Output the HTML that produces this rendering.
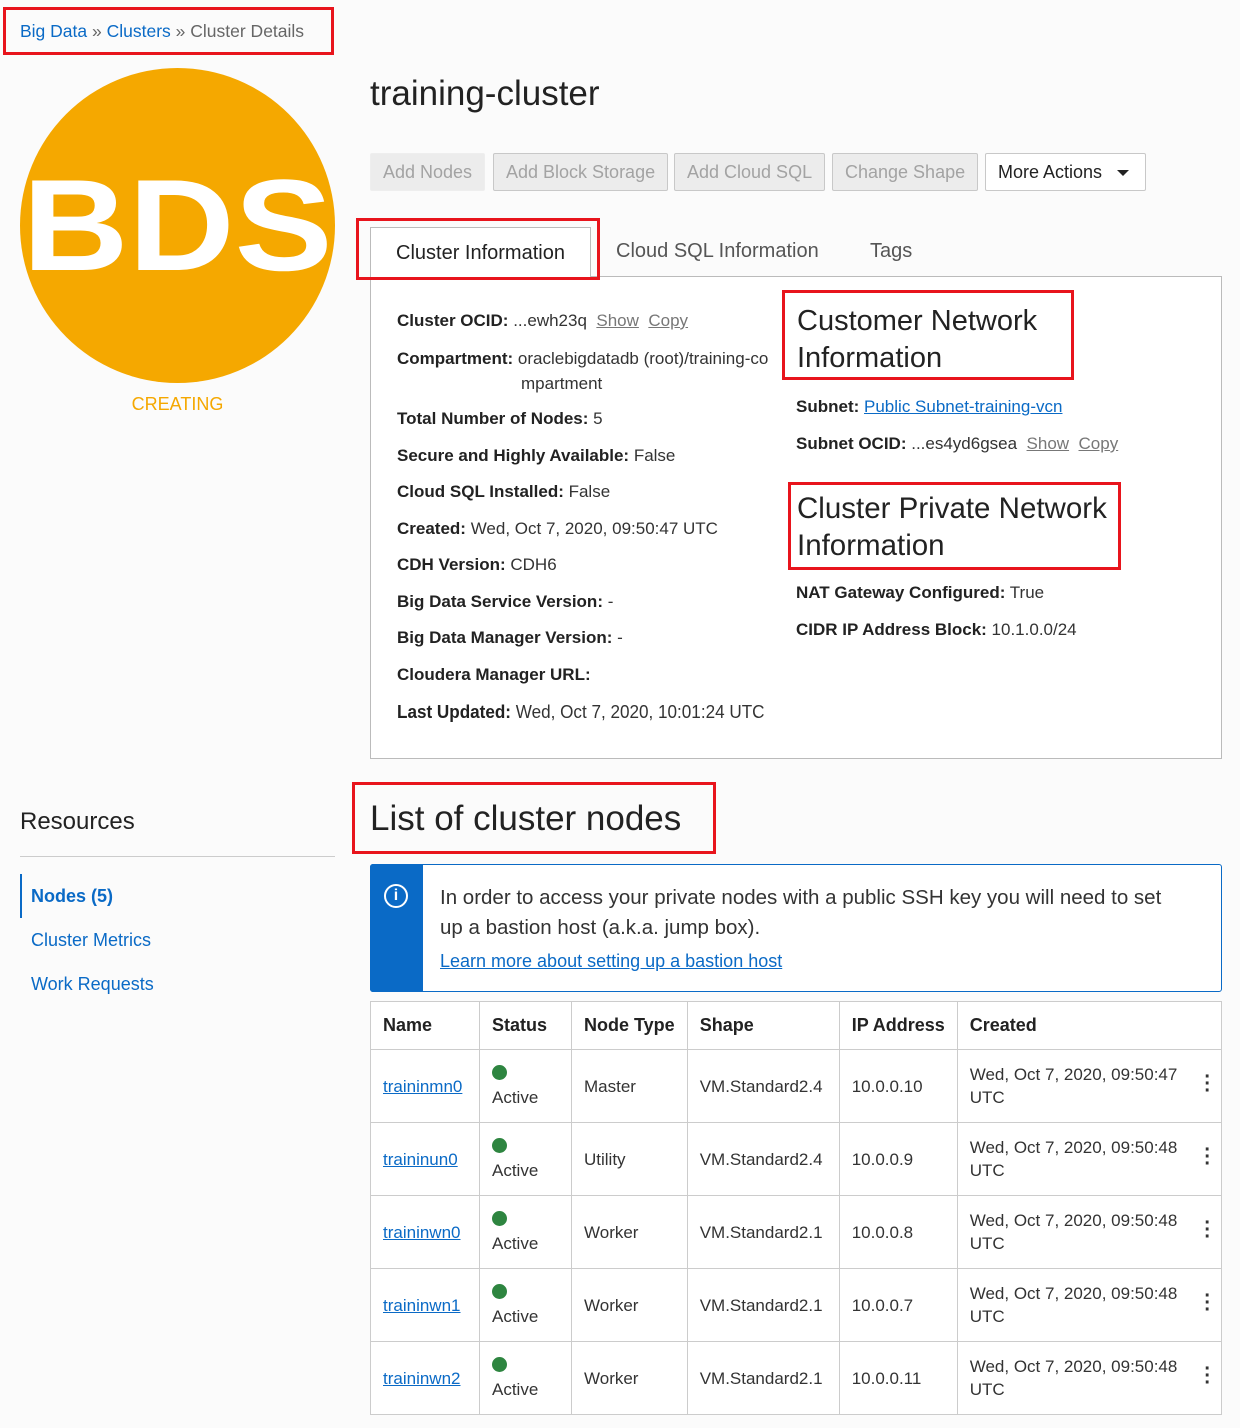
<!DOCTYPE html>
<html><head><meta charset="utf-8"><style>
body{margin:0;width:1240px;height:1428px;background:#fbfbfb;font-family:"Liberation Sans",sans-serif;color:#333;position:relative;overflow:hidden}
.a{position:absolute;white-space:nowrap}
.red{position:absolute;border:3px solid #e8141c;box-sizing:border-box}
a,.lnk{color:#0a6ac6}
.btn{position:absolute;top:153px;height:38px;box-sizing:border-box;border:1px solid #c8c8c8;background:#ececec;color:#a3a3a3;font-size:18px;line-height:36px;padding:0 12px;border-radius:2px}
.lb{font-weight:bold;color:#222}
.f{font-size:17px;color:#333}
.u{text-decoration:underline;color:#777}
td,th{border-right:1px solid #ccc;border-bottom:1px solid #ccc;padding:0 12px;font-size:17px;text-align:left;vertical-align:middle}
th{height:47px;color:#222;font-size:18px}
td{height:72px;line-height:23px}
tr td:last-child,tr th:last-child{border-right:none}
.dot{display:inline-block;width:15px;height:15px;border-radius:50%;background:#2e8540}
td a{text-decoration:underline}
</style></head><body>
<div class="red" style="left:3px;top:7px;width:331px;height:48px"></div>
<div class="a" style="left:20px;top:21px;font-size:17.5px"><span class="lnk">Big Data</span> <span style="color:#666">»</span> <span class="lnk">Clusters</span> <span style="color:#666">» Cluster Details</span></div>
<div class="a" style="left:20px;top:68px;width:315px;height:315px;border-radius:50%;background:#f5a800"></div>
<div class="a" style="left:20px;top:150px;width:315px;text-align:center;font-size:130px;font-weight:bold;color:#fff;transform:scaleX(1.13);transform-origin:center">BDS</div>
<div class="a" style="left:20px;top:394px;width:315px;text-align:center;font-size:18px;color:#f5a800">CREATING</div>
<div class="a" style="left:370px;top:74px;font-size:35px;color:#222">training-cluster</div>
<div class="btn" style="left:370px;border-color:#eee">Add Nodes</div>
<div class="btn" style="left:493px">Add Block Storage</div>
<div class="btn" style="left:674px">Add Cloud SQL</div>
<div class="btn" style="left:832px">Change Shape</div>
<div class="btn" style="left:985px;width:161px;background:#fff;color:#222">More Actions <span style="display:inline-block;margin-left:10px;border-left:6px solid transparent;border-right:6px solid transparent;border-top:6px solid #222;vertical-align:middle"></span></div>
<div class="a" style="left:370px;top:276px;width:852px;height:483px;box-sizing:border-box;border:1px solid #bbb;background:#fff"></div>
<div class="a" style="left:370px;top:227px;width:221px;height:52px;box-sizing:border-box;border:1px solid #bbb;border-bottom:none;background:#fff"></div>
<div class="a" style="left:396px;top:242px;font-size:20px;color:#222">Cluster Information</div>
<div class="red" style="left:356px;top:218px;width:244px;height:62px"></div>
<div class="a" style="left:616px;top:240px;font-size:20px;color:#555">Cloud SQL Information</div>
<div class="a" style="left:870px;top:240px;font-size:20px;color:#555">Tags</div>
<div class="a f" style="left:397px;top:311px"><span class="lb">Cluster OCID:</span> ...ewh23q &nbsp;<span class="u">Show</span> &nbsp;<span class="u">Copy</span></div>
<div class="a f" style="left:397px;top:349px"><span class="lb">Compartment:</span> oraclebigdatadb (root)/training-co</div>
<div class="a f" style="left:521px;top:374px">mpartment</div>
<div class="a f" style="left:397px;top:409px"><span class="lb">Total Number of Nodes:</span> 5</div>
<div class="a f" style="left:397px;top:446px"><span class="lb">Secure and Highly Available:</span> False</div>
<div class="a f" style="left:397px;top:482px"><span class="lb">Cloud SQL Installed:</span> False</div>
<div class="a f" style="left:397px;top:519px"><span class="lb">Created:</span> Wed, Oct 7, 2020, 09:50:47 UTC</div>
<div class="a f" style="left:397px;top:555px"><span class="lb">CDH Version:</span> CDH6</div>
<div class="a f" style="left:397px;top:592px"><span class="lb">Big Data Service Version:</span> -</div>
<div class="a f" style="left:397px;top:628px"><span class="lb">Big Data Manager Version:</span> -</div>
<div class="a f" style="left:397px;top:665px"><span class="lb">Cloudera Manager URL:</span></div>
<div class="a f" style="left:397px;top:702px;font-size:18px;transform:scaleX(0.95);transform-origin:left"><span class="lb">Last Updated:</span> Wed, Oct 7, 2020, 10:01:24 UTC</div>
<div class="red" style="left:782px;top:290px;width:292px;height:90px"></div>
<div class="a" style="left:797px;top:303px;font-size:29px;color:#222;line-height:37px;white-space:normal;width:280px">Customer Network Information</div>
<div class="a f" style="left:796px;top:397px"><span class="lb">Subnet:</span> <span class="lnk" style="text-decoration:underline">Public Subnet-training-vcn</span></div>
<div class="a f" style="left:796px;top:434px"><span class="lb">Subnet OCID:</span> ...es4yd6gsea &nbsp;<span class="u">Show</span> &nbsp;<span class="u">Copy</span></div>
<div class="red" style="left:788px;top:482px;width:333px;height:88px"></div>
<div class="a" style="left:797px;top:490px;font-size:29.5px;color:#222;line-height:37px">Cluster Private Network<br>Information</div>
<div class="a f" style="left:796px;top:583px"><span class="lb">NAT Gateway Configured:</span> True</div>
<div class="a f" style="left:796px;top:620px"><span class="lb">CIDR IP Address Block:</span> 10.1.0.0/24</div>
<div class="a" style="left:20px;top:808px;font-size:24px;color:#222">Resources</div>
<div class="a" style="left:20px;top:856px;width:315px;height:1px;background:#ccc"></div>
<div class="a" style="left:20px;top:874px;width:2px;height:44px;background:#0a6ac6"></div>
<div class="a" style="left:31px;top:886px;font-size:18px;font-weight:bold;color:#0a6ac6">Nodes (5)</div>
<div class="a" style="left:31px;top:930px;font-size:18px;color:#0a6ac6">Cluster Metrics</div>
<div class="a" style="left:31px;top:974px;font-size:18px;color:#0a6ac6">Work Requests</div>
<div class="red" style="left:352px;top:782px;width:364px;height:72px"></div>
<div class="a" style="left:370px;top:799px;font-size:35px;color:#222">List of cluster nodes</div>
<div class="a" style="left:370px;top:864px;width:852px;height:128px;box-sizing:border-box;border:1px solid #0a6ac6;border-radius:3px;background:#fff"></div>
<div class="a" style="left:370px;top:864px;width:53px;height:128px;background:#0a6ac6;border-radius:3px 0 0 3px"></div>
<div class="a" style="left:384px;top:884px;width:24px;height:24px;box-sizing:border-box;border:2px solid #fff;border-radius:50%;color:#fff;font-size:16px;font-weight:bold;text-align:center;line-height:20px">i</div>
<div class="a" style="left:440px;top:883px;font-size:20.5px;line-height:30px;color:#333">In order to access your private nodes with a public SSH key you will need to set<br>up a bastion host (a.k.a. jump box).</div>
<div class="a" style="left:440px;top:951px;font-size:18px;color:#0a6ac6;text-decoration:underline">Learn more about setting up a bastion host</div>
<table class="a" style="left:370px;top:1001px;width:852px;border-collapse:collapse;background:#fff;border-top:1px solid #ccc;border-left:1px solid #ccc;border-right:1px solid #ccc" cellspacing="0">
<tr><th style="width:84px">Name</th><th style="width:67px">Status</th><th style="width:90px">Node Type</th><th style="width:127px">Shape</th><th style="width:92px">IP Address</th><th>Created</th></tr>
<tr><td><a>traininmn0</a></td><td><span class="dot"></span><br>Active</td><td>Master</td><td>VM.Standard2.4</td><td>10.0.0.10</td><td style="position:relative">Wed, Oct 7, 2020, 09:50:47<br>UTC<span style="position:absolute;right:10px;top:24px;font-weight:bold;font-size:20px;line-height:7px">·<br>·<br>·</span></td></tr>
<tr><td><a>traininun0</a></td><td><span class="dot"></span><br>Active</td><td>Utility</td><td>VM.Standard2.4</td><td>10.0.0.9</td><td style="position:relative">Wed, Oct 7, 2020, 09:50:48<br>UTC<span style="position:absolute;right:10px;top:24px;font-weight:bold;font-size:20px;line-height:7px">·<br>·<br>·</span></td></tr>
<tr><td><a>traininwn0</a></td><td><span class="dot"></span><br>Active</td><td>Worker</td><td>VM.Standard2.1</td><td>10.0.0.8</td><td style="position:relative">Wed, Oct 7, 2020, 09:50:48<br>UTC<span style="position:absolute;right:10px;top:24px;font-weight:bold;font-size:20px;line-height:7px">·<br>·<br>·</span></td></tr>
<tr><td><a>traininwn1</a></td><td><span class="dot"></span><br>Active</td><td>Worker</td><td>VM.Standard2.1</td><td>10.0.0.7</td><td style="position:relative">Wed, Oct 7, 2020, 09:50:48<br>UTC<span style="position:absolute;right:10px;top:24px;font-weight:bold;font-size:20px;line-height:7px">·<br>·<br>·</span></td></tr>
<tr><td><a>traininwn2</a></td><td><span class="dot"></span><br>Active</td><td>Worker</td><td>VM.Standard2.1</td><td>10.0.0.11</td><td style="position:relative">Wed, Oct 7, 2020, 09:50:48<br>UTC<span style="position:absolute;right:10px;top:24px;font-weight:bold;font-size:20px;line-height:7px">·<br>·<br>·</span></td></tr>
</table>
</body></html>
